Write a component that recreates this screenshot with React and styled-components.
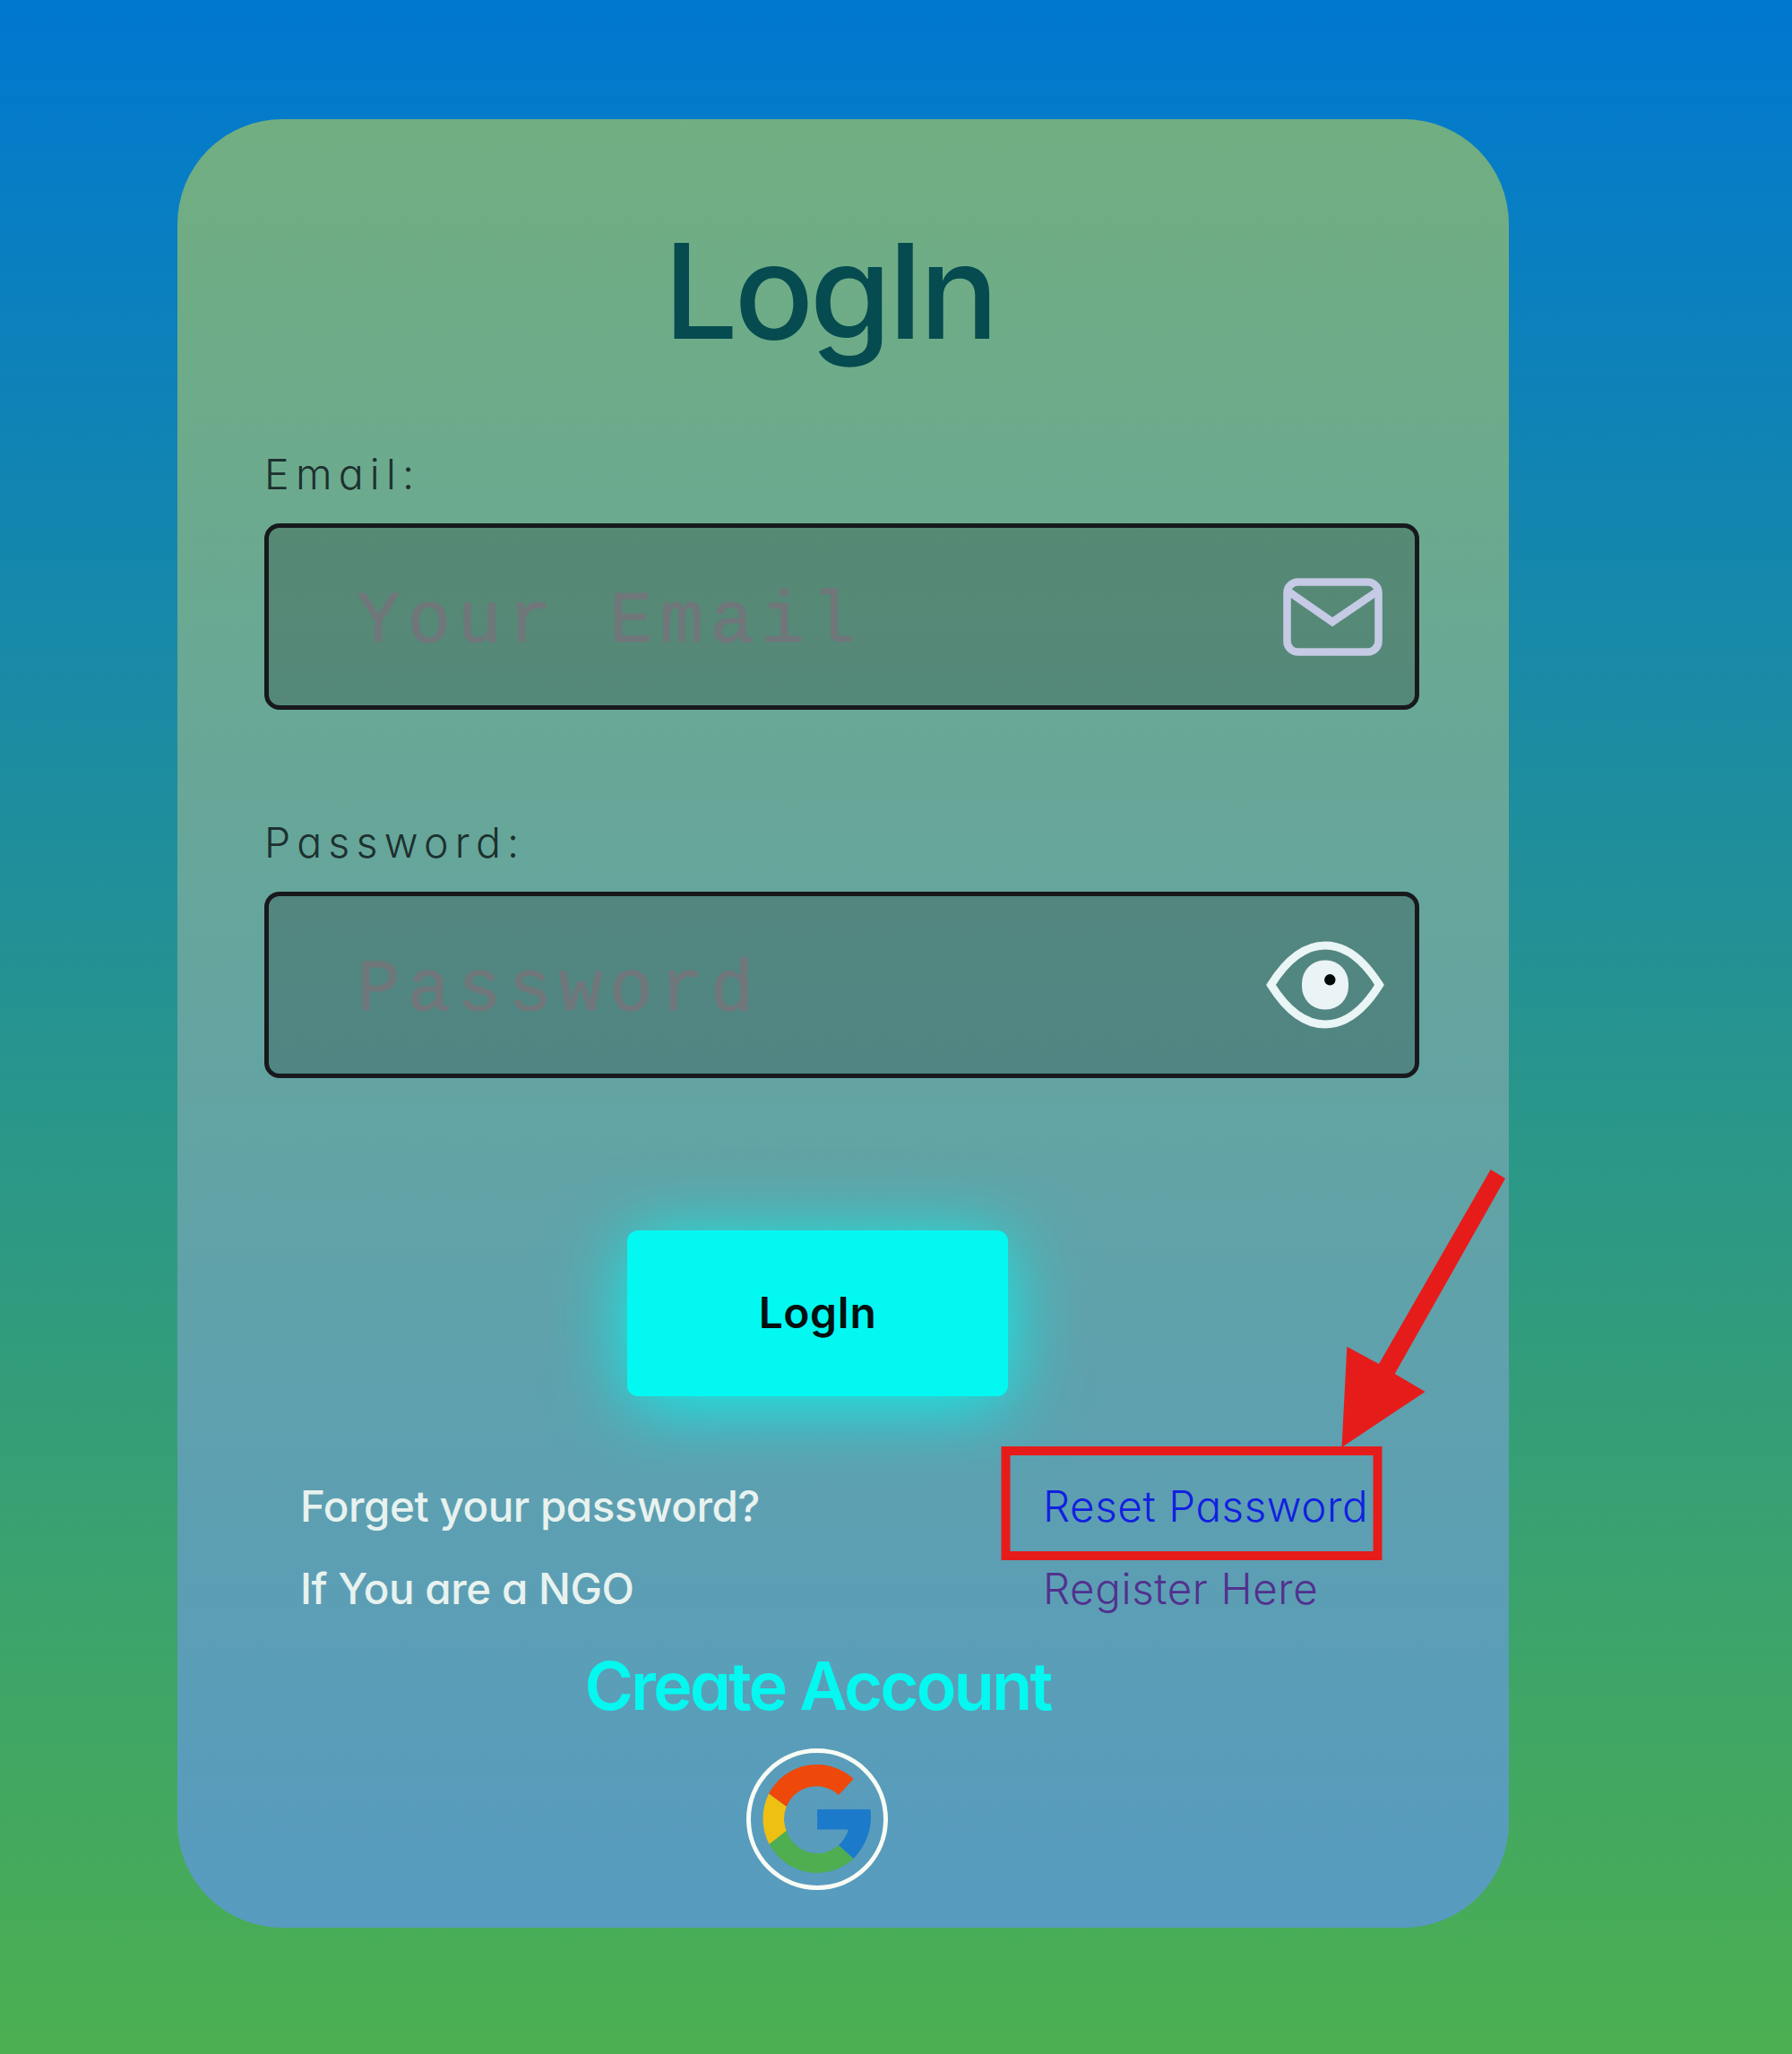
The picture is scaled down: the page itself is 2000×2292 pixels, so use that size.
import React from 'react';
import styled, { createGlobalStyle } from 'styled-components';

const Global = createGlobalStyle`
  * { box-sizing: border-box; }
  body {
    margin: 0;
    font-family: Inter, Lato, sans-serif;
    font-feature-settings: "cv11" 1;
  }
`;

const Page = styled.main`
  position: relative;
  width: 2000px;
  height: 2292px;
  padding: 133px 0 0 198px;
  overflow: hidden;
  background: linear-gradient(#0078d0, #4caf50);
`;

const Card = styled.form`
  width: 1486px;
  height: 2018px;
  padding: 102px 100px 0 97px;
  border-radius: 117px;
  background: linear-gradient(#71ae81, #579bc0);
`;

const Title = styled.h1`
  margin: 0 28px 84px 0;
  font-size: 147px;
  font-weight: 540;
  line-height: 180px;
  letter-spacing: -4.4px;
  text-align: center;
  color: #064b4f;
`;

const Field = styled.div`
  display: flex;
  flex-direction: column;
  gap: 25px;
  & + & { margin-top: 118px; }
`;

const Label = styled.label`
  font-size: 46.5px;
  font-weight: 300;
  line-height: 60px;
  letter-spacing: 7.2px;
  color: #1d302e;
`;

const InputBox = styled.div`
  display: flex;
  align-items: center;
  height: 208px;
  padding: 0 ${(p) => p.$right}px 0 98px;
  border: 5px solid #17191c;
  border-radius: 17px;
  background: rgba(0, 0, 0, 0.19);
`;

const Input = styled.input`
  flex: 1;
  min-width: 0;
  height: 110px;
  padding: 12px 0 0;
  border: 0;
  outline: 0;
  background: transparent;
  font-family: "Liberation Mono", monospace;
  font-size: 81px;
  letter-spacing: 7.800px;
  &::placeholder {
    color: #70777b;
    opacity: 1;
    -webkit-text-stroke: 1px #70777b;
  }
`;

const Actions = styled.section`
  display: flex;
  flex-direction: column;
  align-items: center;
  padding: 170px 54px 0 0;
`;

const LoginButton = styled.button`
  width: 425px;
  height: 185px;
  padding: 0 0 1px;
  border: 0;
  border-radius: 12px;
  background: #04f8f2;
  box-shadow: 0 10px 84px rgba(4, 248, 242, 0.92);
  color: #031010;
  font: 600 48px/60px Inter, sans-serif;
  letter-spacing: 0.5px;
`;

const Links = styled.div`
  display: grid;
  grid-template-columns: 829px 1fr;
  align-self: stretch;
  margin-top: 77px;
  padding-left: 40px;
  font-size: 47.5px;
  line-height: 92px;
  white-space: nowrap;
`;

const Hint = styled.span`
  font-weight: 450;
  letter-spacing: -0.45px;
  color: #e8f2ef;
`;

const Link = styled.a`
  font-weight: 300;
  letter-spacing: 0.6px;
  color: ${(p) => p.$color};
`;

const Create = styled.h2`
  margin: 12px 0 21px;
  font-size: 74px;
  font-weight: 600;
  line-height: 100px;
  letter-spacing: -2.9px;
  color: #04f8f0;
`;

const GoogleButton = styled.a`
  display: flex;
  width: 158px;
  height: 158px;
  margin: -1px 2px 0 0;
  border: 5px solid #f8fcf5;
  border-radius: 50%;
`;

const Annotation = styled.svg`
  position: absolute;
  left: 0;
  top: 0;
  pointer-events: none;
`;

const MailIcon = () => (
  <svg width="111" height="87" viewBox="0 0 111 87" fill="none" stroke="#c5cae5" strokeWidth="8.6">
    <rect x="4.5" y="4.5" width="102" height="78" rx="12" />
    <path d="M6 15 55 49 105 15" />
  </svg>
);

const EyeIcon = () => (
  <svg width="132" height="98" viewBox="0 0 132 98">
    <path d="M5.5 49C23 21 42 5 66 5s43 16 60.500 44C109 77 90 93 66 93S23 77 5.500 49Z" fill="none" stroke="#eaf5f5" strokeWidth="9" />
    <rect x="40" y="21.500" width="52" height="55" rx="25" ry="26" fill="#eaf3f5" />
    <circle cx="71.300" cy="43.300" r="6.200" fill="#020a0a" />
  </svg>
);

const GoogleIcon = () => (
  <svg width="148" height="148" viewBox="837.500 1956 148 148">
    <path fill="#ee480a" d="M857.500 2001.500A61 62 0 0 1 952.200 1985L935.500 2003A36 36 0 0 0 877.300 2016Z" />
    <path fill="#eec012" d="M857.500 2001.500A61 62 0 0 0 858 2058L877.300 2043A36 36 0 0 1 877.300 2016Z" />
    <path fill="#4eae50" d="M858 2058A61 62 0 0 0 952.200 2074L935.500 2059A36 36 0 0 1 877.300 2043Z" />
    <path fill="#1c7acb" d="M911.600 2019H971Q974.500 2050 952.200 2074L935.500 2059Q943.500 2051.500 946.400 2041.500H911.600Z" />
  </svg>
);

export default function App() {
  return (
    <Page>
      <Global />
      <Card>
        <Title>LogIn</Title>
        <Field>
          <Label>Email:</Label>
          <InputBox $right={36}>
            <Input placeholder="Your Email" />
            <MailIcon />
          </InputBox>
        </Field>
        <Field>
          <Label>Password:</Label>
          <InputBox $right={34}>
            <Input type="password" placeholder="Password" />
            <EyeIcon />
          </InputBox>
        </Field>
        <Actions>
          <LoginButton type="button">LogIn</LoginButton>
          <Links>
            <Hint>Forget your password?</Hint>
            <Link $color="#1120e0">Reset Password</Link>
            <Hint>If You are a NGO</Hint>
            <Link $color="#51318f">Register Here</Link>
          </Links>
          <Create>Create Account</Create>
          <GoogleButton aria-label="Google"><GoogleIcon /></GoogleButton>
        </Actions>
      </Card>
      <Annotation width="2000" height="2292" viewBox="0 0 2000 2292">
        <rect x="1122.500" y="1619" width="415" height="117" fill="none" stroke="#e61c1b" strokeWidth="10" />
        <path fill="#e61c1b" d="M1663.700 1305 1680 1315 1556.700 1533 1590.600 1553 1497.500 1615 1503.300 1502.800 1539 1522Z" />
      </Annotation>
    </Page>
  );
}
